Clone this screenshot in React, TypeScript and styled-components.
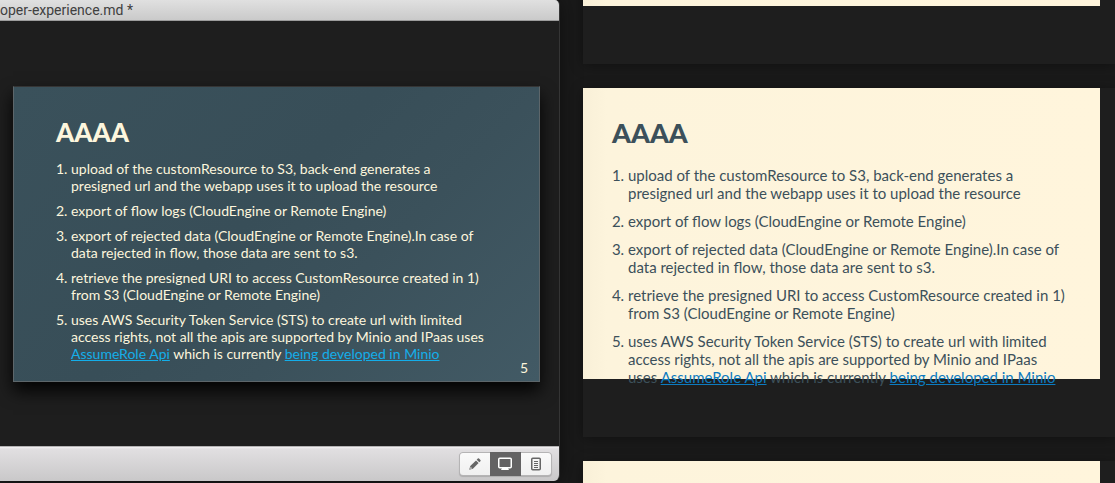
import React from "react";
import styled, { createGlobalStyle, css } from "styled-components";

const GlobalStyle = createGlobalStyle`
  *, *::before, *::after { box-sizing: border-box; }
  body {
    margin: 0;
    background: #1a1a1a;
    font-family: Lato, "Liberation Sans", sans-serif;
  }
`;

const Page = styled.div`
  display: grid;
  grid-template-columns: minmax(0, 560fr) minmax(0, 555fr);
  height: 100vh;
  min-height: 420px;
  overflow: hidden;
`;

const Editor = styled.main`
  display: flex;
  flex-direction: column;
  margin-bottom: 2px;
  border-right: 1px solid #353535;
  border-radius: 0 5px 6px 0;
  background: #1e1e1e;
  box-shadow: 0 0 20px rgba(0, 0, 0, 0.5);
  overflow: hidden;
`;

const TitleBar = styled.header`
  flex: none;
  height: 21px;
  border-bottom: 1px solid #9c9c9c;
  background: linear-gradient(#e0e0e0, #cacaca);
  color: #404040;
  font: 14px/20px Roboto, "Liberation Sans", sans-serif;
  white-space: nowrap;
`;

const Canvas = styled.section`
  flex: 1;
  display: flex;
  align-items: center;
  padding: 1px 19px 0 13px;
`;

const ToolBar = styled.footer`
  flex: none;
  display: flex;
  justify-content: flex-end;
  align-items: center;
  height: 35px;
  padding-right: 7px;
  border-top: 1px solid #b4b3b4;
  background: linear-gradient(#f3f2f3 0, #e1dfe1 2px, #c9c8c9);
`;

const Segments = styled.div`
  display: flex;
  height: 24px;
  border: 1px solid #b5b4b5;
  border-radius: 4px;
  background: #b5b4b5;
  box-shadow: 0 1px 1px rgba(0, 0, 0, 0.15);
`;

const Segment = styled.button<{ $active?: boolean }>`
  display: grid;
  place-items: center;
  width: 30px;
  padding: 0;
  border: 0;
  background: linear-gradient(#fafafa, #f0f0f0);
  color: #666;

  &:first-child { border-radius: 3px 0 0 3px; }
  &:last-child { border-radius: 0 3px 3px 0; }

  ${({ $active }) =>
    $active &&
    css`
      width: 31px;
      margin: -1px 0;
      background: #636263;
      color: #fff;
    `}
`;

type Tone = "dark" | "light";

const Slide = styled.article<{ $tone: Tone }>`
  position: relative;
  width: 100%;
  min-height: 0;
  aspect-ratio: 16 / 9;

  ${({ $tone }) =>
    $tone === "dark"
      ? css`
          padding: 28px 48px 0 42px;
          border: 1px solid #5d666a;
          border-top-color: #353535;
          background: linear-gradient(135deg, #3a515b 0%, #384e58 45%, #3b515b 65%, #425a65 100%);
          color: #fdf6dd;
          box-shadow: 0 9px 16px rgba(0, 0, 0, 0.9);
        `
      : css`
          padding: 28px 33px 0 29px;
          background: linear-gradient(90deg, #f9f0d8 0, #fdf4dc 24px, #fff5dc 100%);
          color: #3c505a;
        `}
`;

const Heading = styled.h1<{ $tone: Tone }>`
  margin: 0;
  font-weight: 900;
  font-size: ${({ $tone }) => ($tone === "dark" ? 26 : 27)}px;
  line-height: 34px;
`;

const Steps = styled.ol<{ $tone: Tone }>`
  display: flex;
  flex-direction: column;
  margin: 0;
  ${({ $tone }) =>
    $tone === "dark"
      ? css`
          gap: 8px;
          padding: 11px 0 0 15px;
          font-size: 14px;
          line-height: 17px;
        `
      : css`
          gap: 10px;
          padding: 16px 0 0 16px;
          font-size: 15px;
          line-height: 18px;
        `}
`;

const Link = styled.a<{ $tone: Tone }>`
  color: ${({ $tone }) => ($tone === "dark" ? "#14aeea" : "#0d7bc0")};
  text-decoration: underline;
`;

const PageNumber = styled.span`
  position: absolute;
  right: 11px;
  bottom: 5px;
  font-size: 14px;
  line-height: 17px;
`;

const Overview = styled.aside`
  display: flex;
  flex-direction: column;
  justify-content: center;
  gap: 24px;
  height: 100%;
  padding: 42px 0 0 23px;
  overflow: hidden;
`;

const Card = styled.div`
  flex: none;
  padding: 0 15px 58px 0;
  background: #1e1e1e;
  box-shadow: 0 2px 12px rgba(0, 0, 0, 0.35);
`;

function SlideContent({ tone }: { tone: Tone }) {
  return (
    <>
      <Heading $tone={tone}>AAAA</Heading>
      <Steps $tone={tone}>
        <li>upload of the customResource to S3, back-end generates a presigned url and the webapp uses it to upload the resource</li>
        <li>export of flow logs (CloudEngine or Remote Engine)</li>
        <li>export of rejected data (CloudEngine or Remote Engine).In case of data rejected in flow, those data are sent to s3.</li>
        <li>retrieve the presigned URI to access CustomResource created in 1) from S3 (CloudEngine or Remote Engine)</li>
        <li>
          uses AWS Security Token Service (STS) to create url with limited access rights, not all the apis are supported by
          Minio and IPaas uses <Link $tone={tone} href="#assume-role">AssumeRole Api</Link> which is currently{" "}
          <Link $tone={tone} href="#minio">being developed in Minio</Link>
        </li>
      </Steps>
    </>
  );
}

const PencilIcon = () => (
  <svg width="14" height="14" viewBox="0 0 14 14" fill="currentColor" aria-hidden="true">
    <path d="M1.2 12.8 2.3 9.1 8 3.4 10.6 6 4.9 11.7Z" />
    <path d="M8.7 2.7 9.8 1.6Q10.4 1 11 1.6L12.4 3Q13 3.6 12.4 4.2L11.3 5.3Z" />
    <path d="m2.7 9.9 1.4 1.4-1.5.5-.4-.4Z" fill="#f5f5f5" />
  </svg>
);

const ScreenIcon = () => (
  <svg width="17" height="14" viewBox="0 0 17 14" aria-hidden="true">
    <rect x="1.75" y="1.25" width="12.5" height="9.5" rx="1" fill="none" stroke="currentColor" strokeWidth="1.5" />
    <path d="M5 11h6l1 2H4Z" fill="currentColor" />
  </svg>
);

const NotesIcon = () => (
  <svg width="12" height="14" viewBox="0 0 12 14" fill="none" stroke="currentColor" aria-hidden="true">
    <rect x="1.75" y="1.25" width="8.5" height="11.5" rx="1" strokeWidth="1.5" />
    <path d="M4 4.5h4M4 6.5h4M4 8.5h4M4 10.5h4" />
  </svg>
);

export default function App() {
  return (
    <>
      <GlobalStyle />
      <Page>
        <Editor>
          <TitleBar>oper-experience.md *</TitleBar>
          <Canvas>
            <Slide $tone="dark">
              <SlideContent tone="dark" />
              <PageNumber>5</PageNumber>
            </Slide>
          </Canvas>
          <ToolBar>
            <Segments role="group" aria-label="View">
              <Segment type="button" aria-label="Edit"><PencilIcon /></Segment>
              <Segment type="button" aria-label="Preview" aria-pressed="true" $active><ScreenIcon /></Segment>
              <Segment type="button" aria-label="Notes"><NotesIcon /></Segment>
            </Segments>
          </ToolBar>
        </Editor>
        <Overview>
          <Card><Slide $tone="light" /></Card>
          <Card>
            <Slide $tone="light"><SlideContent tone="light" /></Slide>
          </Card>
          <Card><Slide $tone="light" /></Card>
        </Overview>
      </Page>
    </>
  );
}
